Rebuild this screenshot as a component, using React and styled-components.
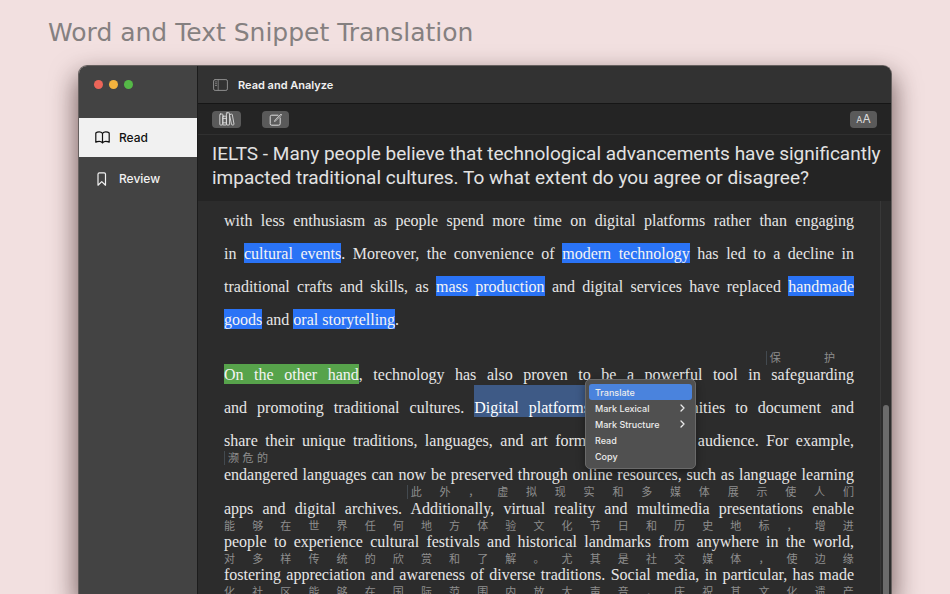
import React from 'react';
import styled, { createGlobalStyle, css } from 'styled-components';

const sans = `Inter, "Liberation Sans", sans-serif`;
const serif = `"Liberation Serif", "Noto Sans CJK SC", serif`;

const GlobalStyle = createGlobalStyle`
    * {
        box-sizing: border-box;
    }

    body {
        margin: 0;
        background: #f2e0e0;
    }

    button {
        margin: 0;
        padding: 0;
        border: 0;
        font: inherit;
        color: inherit;
        background: none;
    }

    svg {
        display: block;
    }
`;

// Page
const Page = styled.div`
    display: flex;
    flex-direction: column;
    height: 100vh;
    overflow: hidden;
    background: #f2e0e0;
`;

const PageTitle = styled.h1`
    margin: 0;
    padding: 17px 48px 16px;
    font-family: "DejaVu Sans", sans-serif;
    font-size: 25px;
    line-height: 32px;
    font-weight: 400;
    color: #858080;
`;

const AppWindow = styled.div`
    flex: 1;
    min-height: 0;
    display: flex;
    margin: 0 58px 0 78px;
    border: 1px solid #66605f;
    border-bottom: 0;
    border-radius: 9px 9px 0 0;
    overflow: hidden;
    font-family: ${sans};
    box-shadow: 0 12px 26px 2px rgba(40, 15, 15, .6);
`;

// Sidebar
const Sidebar = styled.aside`
    flex: 0 0 119px;
    background: #434343;
    border-right: 1px solid #1c1c1c;
`;

const Lights = styled.div`
    display: flex;
    gap: 6px;
    height: 52px;
    padding: 14px 15px 0;
`;

const Light = styled.button`
    width: 9px;
    height: 9px;
    border-radius: 50%;
    background: ${({ $color }) => $color};
`;

const SideNav = styled.nav`
    display: flex;
    flex-direction: column;
    gap: 2px;
`;

const SideLink = styled.a`
    display: flex;
    align-items: center;
    gap: 9px;
    height: 39px;
    padding-left: 16px;
    font-size: 12px;
    font-weight: 500;
    text-decoration: none;
    color: ${({ $active }) => ($active ? '#111' : '#f2f2f2')};
    background: ${({ $active }) => ($active ? '#f1f1f1' : 'transparent')};
`;

// Main column
const Main = styled.main`
    flex: 1;
    min-width: 0;
    display: flex;
    flex-direction: column;
    background: #242424;
`;

const TitleBar = styled.header`
    display: flex;
    align-items: center;
    gap: 10px;
    height: 38px;
    padding-left: 15px;
    background: #323232;
    border-bottom: 1px solid #161616;
    color: #8f8f8f;
`;

const WindowTitle = styled.h2`
    margin: 0;
    font-size: 11px;
    font-weight: 600;
    color: #f0f0f0;
`;

const Toolbar = styled.div`
    display: flex;
    align-items: center;
    gap: 21px;
    height: 31px;
    padding: 0 14px;
    border-bottom: 1px solid #303030;
`;

const ToolButton = styled.button`
    display: flex;
    align-items: center;
    justify-content: center;
    width: ${({ $wide }) => ($wide ? 29 : 27)}px;
    height: 17px;
    margin-left: ${({ $end }) => ($end ? 'auto' : 0)};
    border-radius: 4px;
    background: #5a5a5a;
    color: #dcdcdc;
`;

const Question = styled.h3`
    margin: 0;
    padding: 7px 14px 11px;
    font-family: Roboto, "Liberation Sans", sans-serif;
    font-size: 19px;
    line-height: 24px;
    font-weight: 400;
    color: #e2e2e2;
    white-space: nowrap;
`;

const Reader = styled.div`
    flex: 1;
    min-height: 0;
    position: relative;
    display: flex;
    background: #2c2c2c;
`;

const Article = styled.article`
    flex: 1;
    min-width: 0;
    padding: 0 26px;
    overflow: hidden;
    font-family: ${serif};
    font-size: 16px;
    line-height: 20px;
    color: #e6e6e6;
`;

const Paragraph = styled.div`
    margin: -3px 0 24px;
`;

const Line = styled.div`
    display: flex;
    flex-direction: column;
    min-height: 33px;
`;

const LineText = styled.div`
    margin-top: auto;
    white-space: nowrap;
    text-align: justify;
    text-align-last: ${({ $last }) => ($last ? 'left' : 'justify')};
`;

const Gloss = styled.div`
    display: flex;
    justify-content: space-between;
    height: 13px;
    margin-left: ${({ $from }) => $from || 0}%;
    margin-right: ${({ $to }) => $to || 0}%;
    font-size: 11px;
    line-height: 14px;
    color: #8e8e8e;

    ${({ $mark }) => $mark && css`
        height: 14px;
        padding-left: 3px;
        border-left: 1px solid #434a50;
    `}
`;

const markColors = {
    lexical: '#2a73f6',
    structure: '#57a34b',
};

const Mark = styled.mark`
    padding: 2px 0 1px;
    color: #f4f4f4;
    background: ${({ $kind }) => markColors[$kind]};
`;

const Selection = styled.span`
    padding: 14px 0 1px;
    color: #fff;
    background: #3e5a86;
`;

const Track = styled.div`
    flex: 0 0 11px;
    display: grid;
    grid-template-rows: 52fr 48fr;
    padding: 0 2px;
    border-left: 1px solid #383838;
`;

const Thumb = styled.div`
    grid-row: 2;
    border-radius: 3px 3px 0 0;
    background: #6b6b6b;
`;

// Context menu, floats over the article
const Menu = styled.div`
    position: absolute;
    top: 178px;
    left: 387px;
    width: 111px;
    padding: 4px 3px;
    border: 1px solid #6a6a6a;
    border-radius: 5px;
    background: #505050;
    box-shadow: 0 3px 8px rgba(0, 0, 0, .4);
`;

const MenuItem = styled.button`
    display: flex;
    align-items: center;
    justify-content: space-between;
    width: 100%;
    height: 16px;
    padding: 0 7px 0 6px;
    border-radius: 3px;
    font-size: 9px;
    font-weight: 500;
    color: #ececec;
    background: ${({ $active }) => ($active ? '#4a83dd' : 'transparent')};
`;

const Icon = ({ width, height, stroke = 1, children }) => (
    <svg width={width} height={height} viewBox={`0 0 ${width} ${height}`} fill="none" stroke="currentColor"
        strokeWidth={stroke} strokeLinecap="round" strokeLinejoin="round" aria-hidden="true">
        {children}
    </svg>
);

const BookIcon = () => (
    <Icon width={15} height={13} stroke={1.2}>
        <path d="M7.5 2.4C6.7 1.3 5.5.8 4.2.8 2.9.8 1.6 1.2.8 2v9.2c1-.6 2.1-.9 3.4-.9 1.3 0 2.5.5 3.3 1.6.8-1.1 2-1.6 3.3-1.6 1.3 0 2.4.3 3.4.9V2c-.8-.8-2.1-1.2-3.4-1.2-1.3 0-2.5.5-3.3 1.6zM7.5 2.4v9.5" />
    </Icon>
);

const BookmarkIcon = () => (
    <Icon width={15} height={14} stroke={1.2}>
        <path d="M3 2.2q0-1.4 1.4-1.4h4.7q1.4 0 1.4 1.4v11L6.75 9.6 3 13.2z" />
    </Icon>
);

const SidebarIcon = () => (
    <Icon width={15} height={12}>
        <rect x=".6" y=".6" width="13.8" height="10.8" rx="1.5" />
        <path d="M5.2.6v10.8M2.4 2.9h1.2M2.4 4.7h1.2M2.4 6.5h1.2" strokeWidth=".8" />
    </Icon>
);

const BooksIcon = () => (
    <Icon width={16} height={14} stroke={0.9}>
        <rect x=".8" y="2" width="3" height="11" rx=".6" />
        <rect x="3.8" y="4.2" width="3.6" height="8.8" rx=".6" />
        <rect x="7.4" y=".8" width="3.2" height="12.2" rx=".6" />
        <path d="M10.7 2.6l2-.5c.3 0 .5.1.6.4l1.7 9.7c0 .3-.1.5-.4.6l-1.4.2c-.3 0-.5-.1-.6-.4L10.7 4M4 6.4h3.2M4 10.8h3.2" />
    </Icon>
);

const ComposeIcon = () => (
    <Icon width={14} height={13}>
        <path d="M9 2.2H2.7Q1.2 2.2 1.2 3.7v7q0 1.5 1.5 1.5h7q1.5 0 1.5-1.5V5" />
        <path d="M5.6 8.1l.5-1.3L12 1l.8.8-5.9 5.8z" strokeWidth=".8" />
    </Icon>
);

const TextSize = styled.span`
    font-size: 12px;
    line-height: 16px;

    small {
        font-size: 9px;
    }
`;

const Chevron = () => (
    <Icon width={5} height={8} stroke={1.3}>
        <path d="M1 1l3 3-3 3" />
    </Icon>
);

const menuItems = [
    { label: 'Translate', active: true },
    { label: 'Mark Lexical', more: true },
    { label: 'Mark Structure', more: true },
    { label: 'Read' },
    { label: 'Copy' },
];

const TextLine = ({ gloss, from, to, mark, last, children }) => (
    <Line>
        {gloss && (
            <Gloss lang="zh-CN" $from={from} $to={to} $mark={mark}>
                {[...gloss].map((char, i) => <span key={i}>{char}</span>)}
            </Gloss>
        )}
        <LineText $last={last}>{children}</LineText>
    </Line>
);

const Lexical = ({ children }) => <Mark $kind="lexical">{children}</Mark>;

const App = () => {
    return (
        <Page>
            <GlobalStyle />
            <PageTitle>Word and Text Snippet Translation</PageTitle>
            <AppWindow>
                <Sidebar>
                    <Lights>
                        <Light $color="#ec6559" aria-label="Close" />
                        <Light $color="#f3b33e" aria-label="Minimize" />
                        <Light $color="#55b947" aria-label="Zoom" />
                    </Lights>
                    <SideNav>
                        <SideLink href="#read" $active><BookIcon />Read</SideLink>
                        <SideLink href="#review"><BookmarkIcon />Review</SideLink>
                    </SideNav>
                </Sidebar>
                <Main>
                    <TitleBar>
                        <button aria-label="Toggle sidebar"><SidebarIcon /></button>
                        <WindowTitle>Read and Analyze</WindowTitle>
                    </TitleBar>
                    <Toolbar>
                        <ToolButton $wide aria-label="Library"><BooksIcon /></ToolButton>
                        <ToolButton aria-label="Compose"><ComposeIcon /></ToolButton>
                        <ToolButton $end aria-label="Text size"><TextSize><small>A</small>A</TextSize></ToolButton>
                    </Toolbar>
                    <Question>
                        IELTS - Many people believe that technological advancements have significantly<br />
                        impacted traditional cultures. To what extent do you agree or disagree?
                    </Question>
                    <Reader>
                        <Article>
                            <Paragraph>
                                <TextLine>with less enthusiasm as people spend more time on digital platforms rather than engaging</TextLine>
                                <TextLine>in <Lexical>cultural events</Lexical>. Moreover, the convenience of <Lexical>modern technology</Lexical> has led to a decline in</TextLine>
                                <TextLine>traditional crafts and skills, as <Lexical>mass production</Lexical> and digital services have replaced <Lexical>handmade</Lexical></TextLine>
                                <TextLine last><Lexical>goods</Lexical> and <Lexical>oral storytelling</Lexical>.</TextLine>
                            </Paragraph>
                            <Paragraph>
                                <TextLine gloss="保护" from={86} to={3} mark><Mark $kind="structure">On the other hand</Mark>, technology has also proven to be a powerful tool in safeguarding</TextLine>
                                <TextLine>and promoting traditional cultures. <Selection>Digital platforms</Selection> offer opportunities to document and</TextLine>
                                <TextLine>share their unique traditions, languages, and art forms with a global audience. For example,</TextLine>
                                <TextLine gloss="濒危的" to={93} mark>endangered languages can now be preserved through online resources, such as language learning</TextLine>
                                <TextLine gloss="此外，虚拟现实和多媒体展示使人们" from={29} mark>apps and digital archives. Additionally, virtual reality and multimedia presentations enable</TextLine>
                                <TextLine gloss="能够在世界任何地方体验文化节日和历史地标，增进">people to experience cultural festivals and historical landmarks from anywhere in the world,</TextLine>
                                <TextLine gloss="对多样传统的欣赏和了解。尤其是社交媒体，使边缘">fostering appreciation and awareness of diverse traditions. Social media, in particular, has made</TextLine>
                                <TextLine gloss="化社区能够在国际范围内放大声音，庆祝其文化遗产" />
                            </Paragraph>
                        </Article>
                        <Track><Thumb /></Track>
                        <Menu role="menu">
                            {menuItems.map(({ label, active, more }) => (
                                <MenuItem key={label} role="menuitem" $active={active}>
                                    {label}
                                    {more && <Chevron />}
                                </MenuItem>
                            ))}
                        </Menu>
                    </Reader>
                </Main>
            </AppWindow>
        </Page>
    );
};

export default App;
